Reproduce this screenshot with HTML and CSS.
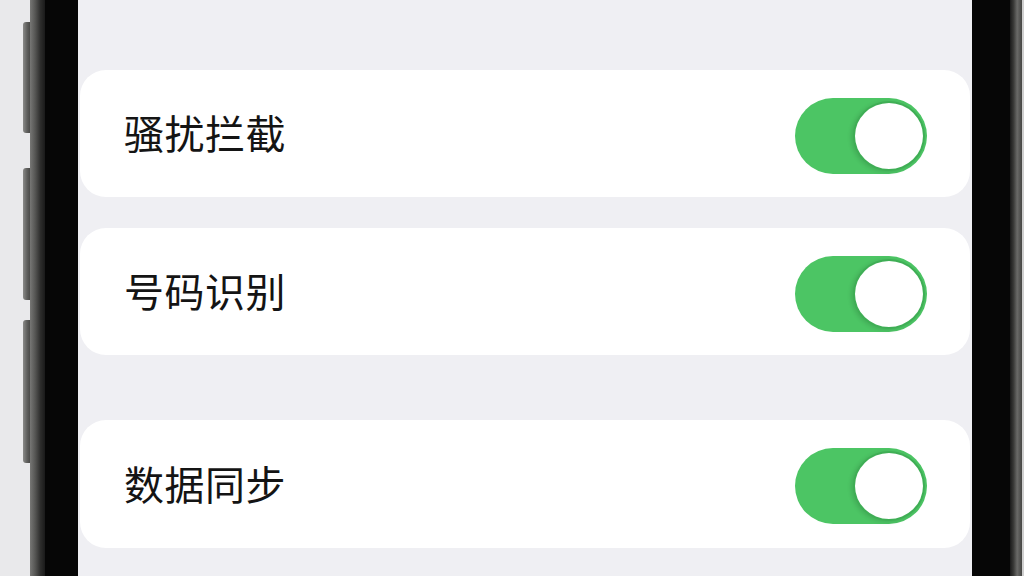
FILE: index.html
```html
<!DOCTYPE html>
<html lang="zh-CN">
<head>
<meta charset="utf-8">
<title>设置</title>
<link rel="stylesheet" href="styles.css">
</head>
<body>
<div class="device">
  <div class="outside-left">
    <div class="side-btn btn-a"></div>
    <div class="side-btn btn-b"></div>
    <div class="side-btn btn-c"></div>
  </div>
  <div class="frame frame-left"></div>
  <div class="bezel bezel-left"></div>
  <main class="screen">
    <section class="card">
      <span class="label">骚扰拦截</span>
      <span class="toggle"><span class="knob"></span></span>
    </section>
    <section class="card card-second">
      <span class="label">号码识别</span>
      <span class="toggle"><span class="knob"></span></span>
    </section>
    <section class="card card-third">
      <span class="label">数据同步</span>
      <span class="toggle"><span class="knob"></span></span>
    </section>
  </main>
  <div class="bezel bezel-right"></div>
  <div class="frame frame-right"></div>
  <div class="outside-right"></div>
</div>
</body>
</html>
```
FILE: styles.css
```css
html, body {
  margin: 0;
  padding: 0;
  width: 1024px;
  height: 576px;
  overflow: hidden;
  background: #e8e8ea;
  font-family: "Noto Sans CJK SC", "Noto Sans", sans-serif;
}

.device {
  display: flex;
  width: 1024px;
  height: 576px;
}

.outside-left {
  width: 30px;
  flex: none;
  display: flex;
  flex-direction: column;
  align-items: flex-end;
  background: #e9e9eb;
}

.side-btn {
  width: 7px;
  border-radius: 3px 0 0 3px;
  background: linear-gradient(90deg, #8a8a88 0%, #5e5e5c 60%, #4a4a48 100%);
}
.btn-a { margin-top: 22px; height: 111px; }
.btn-b { margin-top: 35px; height: 132px; }
.btn-c { margin-top: 20px; height: 143px; }

.frame {
  flex: none;
  height: 100%;
}
.frame-left {
  width: 15px;
  background: linear-gradient(90deg, #777775 0%, #555553 35%, #2d2d2c 70%, #1a1a1a 100%);
}
.frame-right {
  width: 12px;
  background: linear-gradient(90deg, #1a1a1a 0%, #3a3a38 30%, #6a6a68 60%, #454543 100%);
}
.outside-right {
  width: 2px;
  flex: none;
  background: #cfcfcf;
}

.bezel {
  flex: none;
  height: 100%;
  background: #060606;
}
.bezel-left { width: 33px; }
.bezel-right { width: 38px; }

.screen {
  flex: 1;
  background: #efeff3;
  padding: 70px 2px 0;
  display: flex;
  flex-direction: column;
}

.card {
  height: 127px;
  flex: none;
  background: #ffffff;
  border-radius: 26px;
  display: flex;
  align-items: center;
  justify-content: space-between;
  padding: 0 43px 0 44px;
  box-sizing: border-box;
}
.card-second { margin-top: 31px; }
.card-third { margin-top: 65px; height: 128px; }

.label {
  font-size: 40px;
  font-weight: 400;
  color: #141414;
  letter-spacing: 0.5px;
  line-height: 1;
  margin-top: -3px;
}

.toggle {
  width: 132px;
  height: 76px;
  margin-top: 4px;
  border-radius: 38px;
  background: #4cc564;
  display: flex;
  align-items: center;
  justify-content: flex-end;
  padding-right: 2px;
  box-sizing: border-box;
}

.knob {
  width: 72px;
  height: 70px;
  border-radius: 50%;
  background: #ffffff;
  border: 2px solid #3fae55;
  box-sizing: border-box;
  box-shadow: -2px 1px 4px rgba(0, 0, 0, 0.12);
}
```
